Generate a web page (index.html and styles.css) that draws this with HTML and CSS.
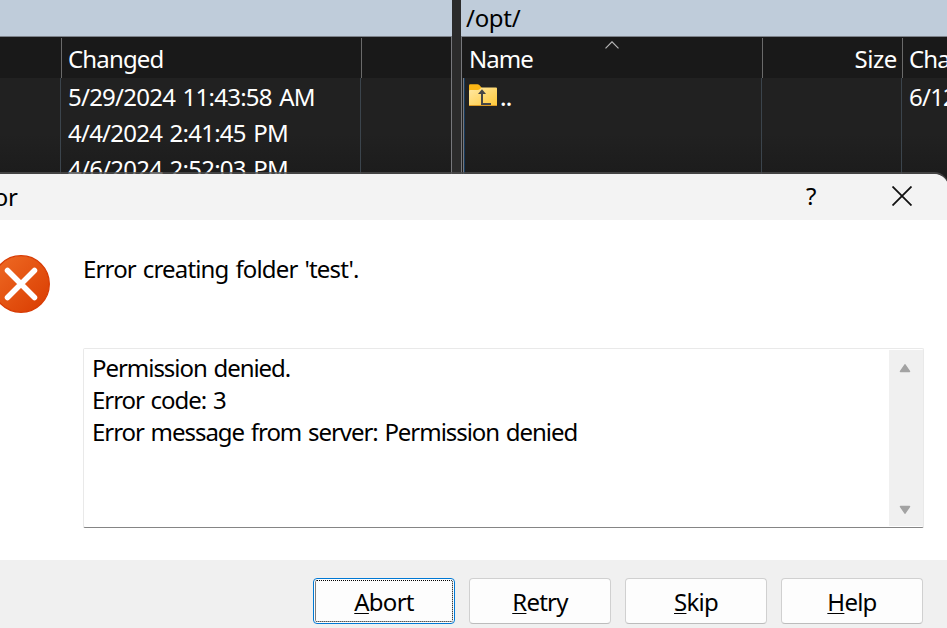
FILE: index.html
```html
<!DOCTYPE html>
<html lang="en">
<head>
<meta charset="utf-8">
<title>Error</title>
<link rel="stylesheet" href="styles.css">
</head>
<body>
<main class="window">
  <section class="pane local">
    <div class="path"></div>
    <div class="columns header">
      <span></span><span class="changed">Changed</span><span></span>
    </div>
    <div class="columns list">
      <div></div>
      <div class="dates">
        <p>5/29/2024 11:43:58 AM</p>
        <p>4/4/2024 2:41:45 PM</p>
        <p>4/6/2024 2:52:03 PM</p>
      </div>
      <div></div>
    </div>
  </section>
  <div class="splitter"></div>
  <section class="pane remote">
    <div class="path"><span>/opt/</span></div>
    <div class="columns header">
      <span class="name">Name
        <svg class="sort" width="14" height="8" viewBox="0 0 14 8"><path d="M.5 7.3 7 .8l6.500 6.500" fill="none" stroke="#b5b5b5" stroke-width="1.200"/></svg>
      </span><span class="size">Size</span><span>Changed</span>
    </div>
    <div class="columns list">
      <div class="up">
        <svg width="28" height="23" viewBox="0 0 28 23">
          <defs><linearGradient id="folder" x1="0" y1="0" x2="1" y2="1"><stop offset="0" stop-color="#ffe9a6"/><stop offset="1" stop-color="#ffc938"/></linearGradient></defs>
          <path d="M0 7V1.500Q0 .3 1.200.3H8.500Q9.500.3 10.300 1L12.500 3.500V7Z" fill="#fbb615"/>
          <path d="M0 7Q0 6 1 6H8.500Q10 6 11 5L12.500 3.500H27Q28 3.500 28 4.500V21Q28 22 27 22H1Q0 22 0 21Z" fill="url(#folder)"/>
          <path d="M0 21.500H28" stroke="#dc9a24"/>
          <path d="M13 7V20H22" fill="none" stroke="#464646" stroke-width="2"/>
          <path d="M9 10 13 5.300 17 10Z" fill="#464646"/>
        </svg>
        <b>..</b>
      </div>
      <div></div>
      <div class="dates"><p>6/12/2024</p></div>
    </div>
  </section>
</main>

<div class="dialog" role="dialog">
  <header class="titlebar">
    <span class="title">Error</span>
    <span class="help">?</span>
    <svg class="close" width="20" height="20" viewBox="0 0 20 20"><path d="M.5.5 19.500 19.500M19.500.5.5 19.500" stroke="#111" stroke-width="1.800"/></svg>
  </header>
  <div class="content">
    <svg class="error-icon" width="58" height="58" viewBox="0 0 58 58">
      <defs><linearGradient id="red" x1="0" y1="0" x2="1" y2="1"><stop offset="0" stop-color="#ef6c25"/><stop offset="1" stop-color="#d93b00"/></linearGradient></defs>
      <circle cx="29" cy="29" r="28.300" fill="url(#red)" stroke="#d83c05" stroke-width="1.300"/>
      <path d="M15.500 15.500 42.500 42.500M42.500 15.500 15.500 42.500" stroke="#fff" stroke-width="5.500" stroke-linecap="round"/>
    </svg>
    <div class="message">
      <p class="summary">Error creating folder 'test'.</p>
      <div class="details">
        <div class="text">
          <p>Permission denied.</p>
          <p>Error code: 3</p>
          <p>Error message from server: Permission denied</p>
        </div>
        <div class="scrollbar">
          <svg width="12" height="10" viewBox="0 0 12 10"><path d="M1.500 8.500 6 1.800 10.500 8.500Z" fill="#a3a3a3" stroke="#a3a3a3" stroke-width="1.500" stroke-linejoin="round"/></svg>
          <svg width="12" height="10" viewBox="0 0 12 10"><path d="M1.500 1.500 6 8.200 10.500 1.500Z" fill="#a3a3a3" stroke="#a3a3a3" stroke-width="1.500" stroke-linejoin="round"/></svg>
        </div>
      </div>
    </div>
  </div>
  <footer class="actions">
    <button class="focused"><u>A</u>bort</button>
    <button><u>R</u>etry</button>
    <button><u>S</u>kip</button>
    <button><u>H</u>elp</button>
  </footer>
</div>
</body>
</html>
```
FILE: styles.css
```css
* { box-sizing: border-box; }
body {
  margin: 0;
  width: 947px;
  height: 628px;
  overflow: hidden;
  position: relative;
  background: #202020;
  font: 400 24px/36px "Noto Sans", "Open Sans", sans-serif;
  letter-spacing: -0.85px;
  white-space: nowrap;
}
p { margin: 0; }

.window { display: flex; height: 190px; color: #fff; }
.pane { overflow: hidden; }
.local { width: 452px; }
.remote { width: 486px; }
.splitter { width: 9px; background: #2b2b2b; }
.path {
  height: 37px;
  padding: 0 0 0 5px;
  background: #bfccda;
  border-bottom: 1px solid #7d828a;
  color: #000;
  letter-spacing: -0.3px;
}
.columns { display: grid; }
.header { height: 41px; padding-top: 1px; line-height: 42px; background: #191919; }
.header > * { border-right: 1px solid #6a6a6a; height: 40px; }
.header > :last-child, .list > :last-child { border-right: 0; }
.list { height: 112px; background: linear-gradient(#212121 50%, #1c1c1c 85%); }
.list > * { border-right: 1px solid #3b444c; padding-top: 1px; }
.local .columns { border-right: 1px solid #77787c; }
.local .header { grid-template-columns: 62px 300px 1fr; }
.local .list { grid-template-columns: 61px 300px 1fr; }
.changed { padding-left: 6px; }
.dates { padding-left: 7px; letter-spacing: -0.76px; word-spacing: 2px; }
.remote .columns { border-left: 1px solid #77787c; }
.remote .header { grid-template-columns: 301px 140px 1fr; }
.remote .list { grid-template-columns: 300px 140px 1fr; }
.remote .header > :last-child { padding-left: 6px; }
.name { position: relative; padding-left: 7px; letter-spacing: -1px; }
.sort { position: absolute; left: 143px; top: 3px; }
.size { text-align: right; padding-right: 5px; letter-spacing: -0.4px; }
.up {
  display: flex;
  gap: 3px;
  padding-left: 7px;
  background: linear-gradient(90deg, transparent 1px, #77787c 1px 2px, #173a5c 2px 3px, transparent 3px);
}
.up svg { margin-top: 5px; flex: none; }
.up b { font-weight: 500; }

.dialog {
  position: absolute;
  left: -52px;
  top: 172px;
  width: 1001px;
  height: 480px;
  overflow: hidden;
  border-top: 2px solid rgba(78, 78, 78, 0.8);
  border-right: 1px solid rgba(78, 78, 78, 0.8);
  border-radius: 0 15px 0 0;
  background: #fff padding-box;
  color: #000;
}
.titlebar {
  display: flex;
  align-items: center;
  height: 46px;
  padding: 0 36px 2px 14px;
  background: #f3f3f3;
}
.title { flex: 1; padding-top: 2px; letter-spacing: -0.3px; }
.help { width: 14px; margin-right: 72px; }
.content { display: flex; height: 340px; padding-left: 44px; }
.error-icon { margin: 35px 33px 0 0; }
.message { padding-top: 31px; letter-spacing: -1.04px; word-spacing: 1.5px; }
.summary { letter-spacing: -0.84px; }
.details {
  display: flex;
  width: 841px;
  height: 180px;
  margin-top: 61px;
  border: 1px solid #e9e9e9;
  border-bottom-color: #858585;
  border-radius: 2px;
  line-height: 32px;
}
.text { flex: 1; padding: 3px 0 0 8px; }
.scrollbar {
  display: flex;
  flex-direction: column;
  justify-content: space-between;
  align-items: center;
  width: 34px;
  margin: 1px 0;
  padding: 13px 2px 11px 0;
  background: #f0f0f0;
}
.actions {
  display: flex;
  gap: 14px;
  height: 92px;
  padding: 18px 0 0 365px;
  background: #f0f0f0;
}
button {
  width: 142px;
  height: 46px;
  padding: 1px 0 0;
  border: 1px solid #d0d0d0;
  border-bottom-color: #bcbcbc;
  border-radius: 4px;
  background: #fdfdfd;
  color: #000;
  font: inherit;
  line-height: 40px;
  letter-spacing: -0.75px;
}
u { text-underline-offset: 2px; text-decoration-thickness: 1px; text-decoration-skip-ink: none; }
.focused { border-color: #0078d4; outline: 1px dotted #000; outline-offset: -3px; }
```
